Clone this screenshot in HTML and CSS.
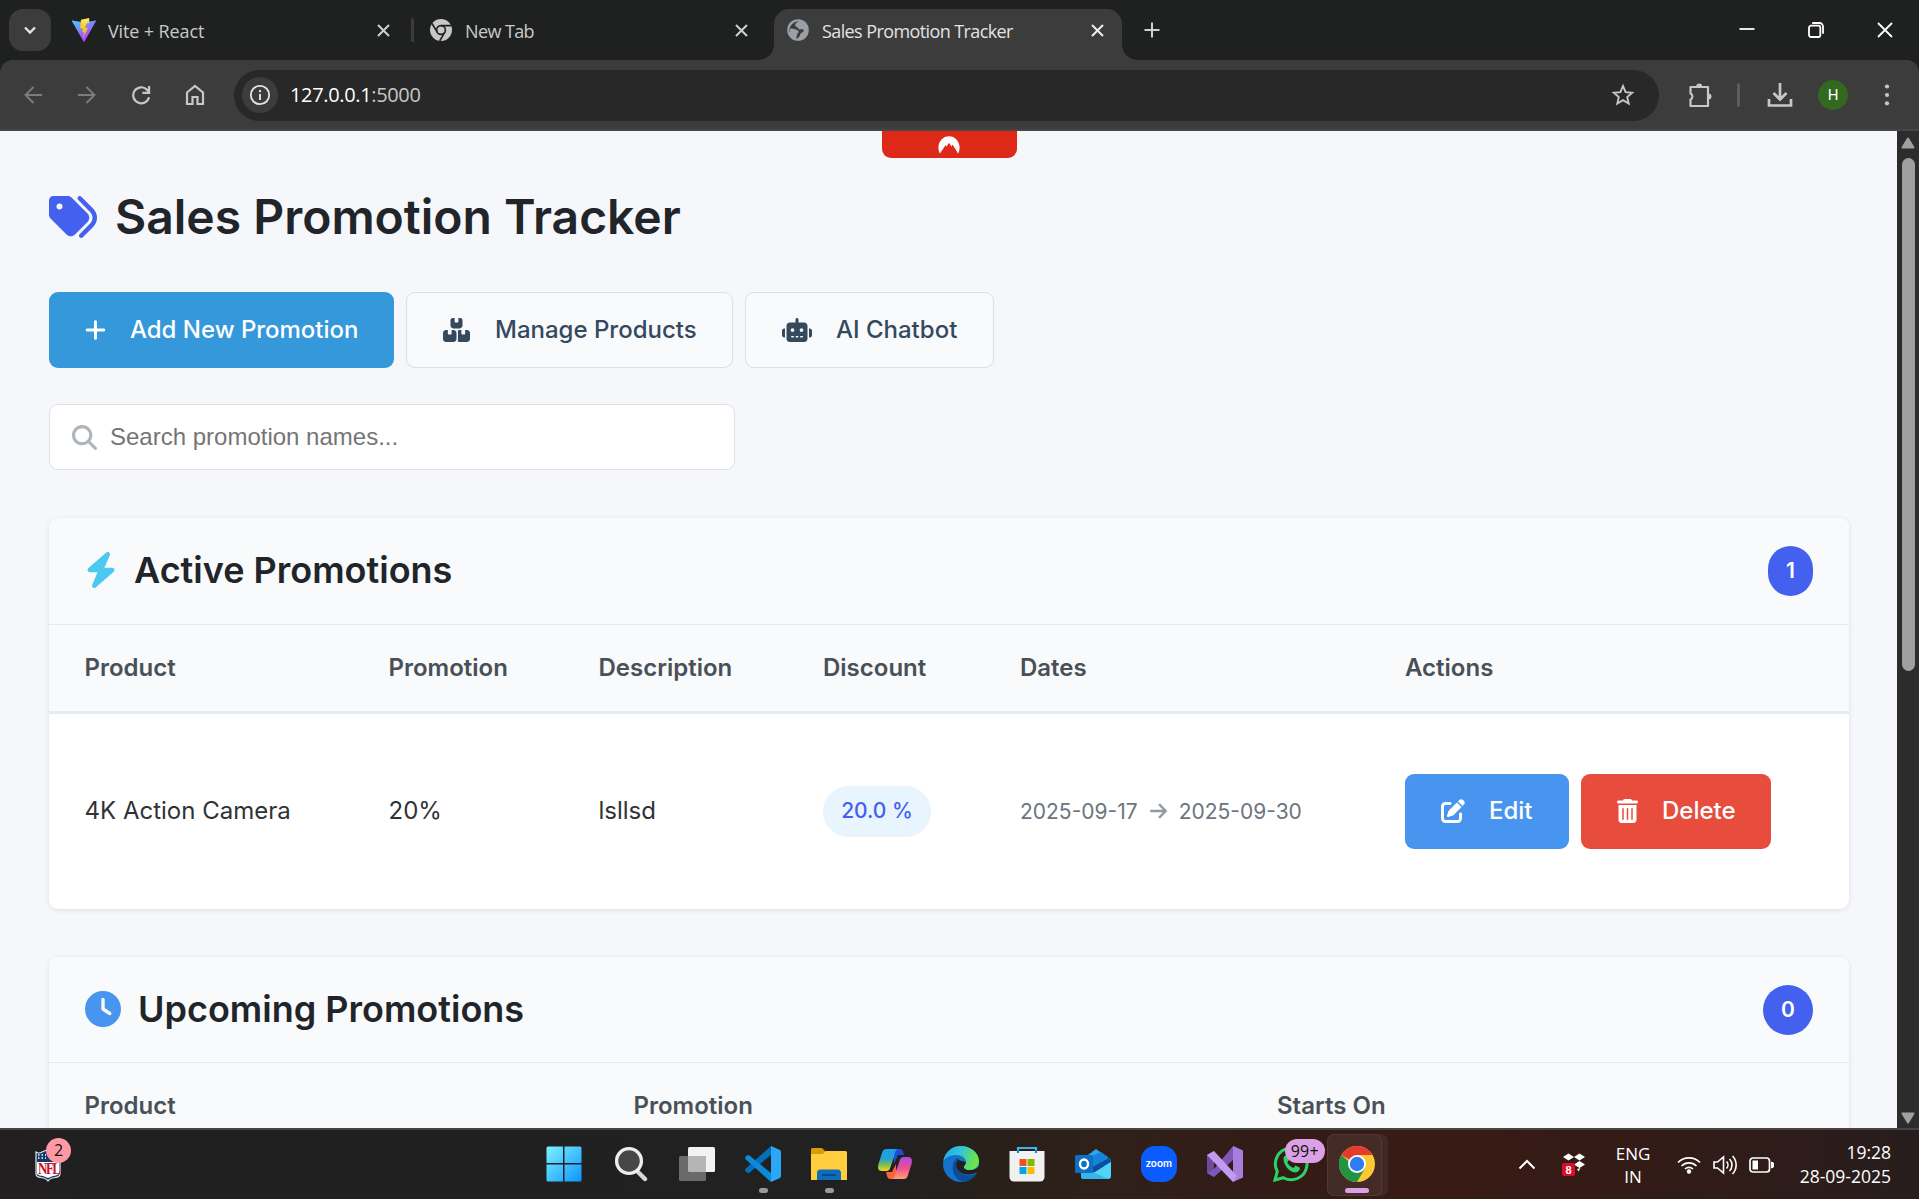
FILE: index.html
```html
<!DOCTYPE html>
<html lang="en">
<head>
<meta charset="utf-8">
<title>Sales Promotion Tracker</title>
<link rel="stylesheet" href="styles.css">
</head>
<body>
<div class="screen">
  <header class="tabstrip">
    <button class="tab-menu"><svg width="14" height="14" viewBox="0 0 14 14"><path d="M2 4.500l5 5 5-5" fill="none" stroke="#e3e3e3" stroke-width="2.400"/></svg></button>
    <div class="tab tab-first">
      <svg class="favicon" width="24" height="24" viewBox="0 0 24 24"><defs><linearGradient id="va" x1="0" y1="0" x2=".6" y2="1"><stop offset="0" stop-color="#41d1ff"/><stop offset="1" stop-color="#bd34fe"/></linearGradient><linearGradient id="vb" x1="0" y1="0" x2="0" y2="1"><stop offset="0" stop-color="#ffea83"/><stop offset=".2" stop-color="#ffdd35"/><stop offset="1" stop-color="#ffa800"/></linearGradient></defs><path d="M.4 2.400L12.200 4.500 23.700 2.400a.5.5 0 0 1 .3.700L12.500 23.600a.6.6 0 0 1-1 0L0 3.200a.5.5 0 0 1 .4-.8z" fill="url(#va)"/><path d="M17.200.1L8.900 1.700l-.6 9 2.600-.5-.7 4 1.900-.5-1.300 6.600 5.300-10.500-2.900.5 1.200-4.700 2.800-.5z" fill="url(#vb)"/></svg>
      <span class="tab-title t-vite">Vite + React</span>
      <svg class="x" width="13" height="13" viewBox="0 0 13 13"><path d="M1 1l11 11M12 1L1 12"/></svg>
    </div>
    <i class="tab-sep"></i>
    <div class="tab tab-second">
      <svg class="favicon" width="24" height="24" viewBox="0 0 24 24"><circle cx="12" cy="12" r="11" fill="#c7c7c7"/><circle cx="12" cy="12" r="5.200" fill="#1f2120"/><circle cx="12" cy="12" r="3.600" fill="#c7c7c7"/><path d="M12 7.600h10M8.200 14.200L3 5.500M15.800 14.200L10.700 23" stroke="#1f2120" stroke-width="1.600"/></svg>
      <span class="tab-title t-new">New Tab</span>
      <svg class="x" width="13" height="13" viewBox="0 0 13 13"><path d="M1 1l11 11M12 1L1 12"/></svg>
    </div>
    <div class="tab tab-active">
      <svg class="favicon" width="24" height="24" viewBox="0 0 24 24"><circle cx="12" cy="12" r="10.800" fill="#9aa0a6"/><path d="M12.800 3.200c-1.500 1-3.600 1.800-3.600 4 0 2 3.300 1.500 3.300 4h4.200c1.300 0 1.500 2 .2 2.800-1.200.8-2.500 1-2.700 2.600-.2 1.700-1.700 3.300-3.700 4.200-.9-1.500.6-3 .3-4.600-.3-1.200-2-1-2-2.400H3.400c-.6-5.500 3.700-10.400 9.400-10.600z" fill="#3c3c3c"/><path d="M4.200 10.500c2 0 3.500-.2 5 .7 1.300.9 3.400.8 3.400 2.600s-2 1.800-2 3.400c-.2 1.700-.5 3-1 3.600-4.300-1.200-6.800-5.600-5.400-10.300z" fill="#9aa0a6"/></svg>
      <span class="tab-title t-sales">Sales Promotion Tracker</span>
      <svg class="x x-on" width="13" height="13" viewBox="0 0 13 13"><path d="M1 1l11 11M12 1L1 12"/></svg>
    </div>
    <svg class="newtab" width="16" height="16" viewBox="0 0 16 16"><path d="M8 .5v15M.5 8h15" stroke="#d0d0d0" stroke-width="2"/></svg>
    <div class="win-controls">
      <svg width="16" height="16" viewBox="0 0 16 16"><path d="M.5 7h15"/></svg>
      <svg width="16" height="16" viewBox="0 0 16 16"><rect x="1" y="3.700" width="11.300" height="11.300" rx="2"/><path d="M4.200 1h7.300a3.500 3.500 0 0 1 3.500 3.500v7.300"/></svg>
      <svg width="16" height="16" viewBox="0 0 16 16"><path d="M1 1l14 14M15 1L1 15"/></svg>
    </div>
  </header>

  <nav class="toolbar">
    <div class="nav-icons">
      <svg class="dim" width="18" height="18" viewBox="0 0 18 18"><path d="M18 9H2M9.500 1L1.500 9l8 8"/></svg>
      <svg class="dim" width="18" height="18" viewBox="0 0 18 18"><path d="M0 9h16M8.500 1l8 8-8 8"/></svg>
      <svg width="20" height="20" viewBox="0 0 20 20"><path d="M18 12.200A8 8 0 1 1 15.900 4.600L18 6.700M18.100 1v6.800h-6.800"/></svg>
      <svg width="20" height="22" viewBox="0 0 20 22"><path d="M2 8.500L10 2l8 6.500V20h-5.500v-7h-5v7H2z"/></svg>
    </div>
    <div class="omnibox">
      <span class="site-info"><svg width="22" height="22" viewBox="0 0 22 22"><circle cx="11" cy="11" r="9.200" fill="none" stroke="#e3e3e3" stroke-width="1.800"/><path d="M11 10v6M11 6v2.200" stroke="#e3e3e3" stroke-width="1.900"/></svg></span>
      <span class="url"><b>127.0.0.1</b>:5000</span>
      <svg class="star" width="24" height="24" viewBox="0 0 24 24"><path d="M12 3l2.600 6.100 6.600.6-5 4.400 1.500 6.500L12 17.100l-5.700 3.500 1.500-6.500-5-4.400 6.600-.6z" fill="none" stroke="#c7c7c7" stroke-width="1.900"/></svg>
    </div>
    <div class="toolbar-right">
      <svg width="26" height="26" viewBox="0 0 26 26"><path d="M3.500 5H21v19H3.500v-6.500a3.300 3.300 0 0 0 0-6z" fill="none" stroke="#c7c7c7" stroke-width="2.200" stroke-linejoin="round"/><path d="M9.200 4.500a3 3 0 0 1 6 0zM21.500 11.500a3 3 0 0 1 0 6z" fill="#c7c7c7"/></svg>
      <i class="bar-sep"></i>
      <svg width="26" height="26" viewBox="0 0 26 26"><path d="M13 1v16M6.500 11l6.500 6.500 6.500-6.500M2 17v6.500h22V17" fill="none" stroke="#c7c7c7" stroke-width="2.700"/></svg>
      <span class="avatar">H</span>
      <svg width="6" height="24" viewBox="0 0 6 24" fill="#c7c7c7"><circle cx="3" cy="3.500" r="2.100"/><circle cx="3" cy="12" r="2.100"/><circle cx="3" cy="20.300" r="2.100"/></svg>
    </div>
  </nav>

  <div class="viewport">
    <main class="page">
      <div class="vpn-tab"><svg width="22" height="18" viewBox="0 0 22 18"><path d="M1.900 17.500C.8 15.500.4 13.600.4 11.500.4 5.200 5.200.3 11 .3s10.600 4.900 10.600 11.200c0 2.100-.5 4-1.500 6l-5.600-8.900-.9 1.500.3 1.100L11 6.800l-2.300 3.600.6 1.500-1.600-3z" fill="#fff"/></svg></div>
      <h1 class="page-title"><svg width="48" height="48" viewBox="0 0 512 512"><path d="M345 39.100L472.800 168.400c52.400 53 52.400 138.200 0 191.200L360.800 472.900c-9.300 9.400-24.500 9.500-33.900 .2s-9.500-24.500-.2-33.900L438.600 325.900c33.900-34.300 33.900-89.400 0-123.700L310.900 72.900c-9.300-9.400-9.200-24.600 .2-33.900s24.600-9.200 33.900 .2zM0 229.500L0 80C0 53.500 21.500 32 48 32l149.500 0c17 0 33.300 6.700 45.300 18.700l168 168c25 25 25 65.500 0 90.500L277.300 442.700c-25 25-65.500 25-90.500 0l-168-168C6.700 262.700 0 246.500 0 229.500zM144 144a32 32 0 1 0 -64 0 32 32 0 1 0 64 0z"/></svg><span>Sales Promotion Tracker</span></h1>
      <div class="actions">
        <button class="btn btn-add"><svg width="21" height="24" viewBox="0 0 448 512"><path d="M256 80c0-17.700-14.300-32-32-32s-32 14.300-32 32l0 144L48 224c-17.700 0-32 14.300-32 32s14.300 32 32 32l144 0 0 144c0 17.700 14.300 32 32 32s32-14.300 32-32l0-144 144 0c17.700 0 32-14.300 32-32s-14.300-32-32-32l-144 0 0-144z"/></svg><span>Add New Promotion</span></button>
        <button class="btn btn-light btn-manage"><svg width="27" height="24" viewBox="0 0 576 512"><path d="M248 0L208 0c-26.500 0-48 21.500-48 48l0 112c0 35.300 28.700 64 64 64l128 0c35.300 0 64-28.700 64-64l0-112c0-26.500-21.500-48-48-48L328 0l0 80c0 8.800-7.200 16-16 16l-48 0c-8.800 0-16-7.200-16-16l0-80zM64 256c-35.300 0-64 28.700-64 64L0 448c0 35.300 28.700 64 64 64l160 0c35.300 0 64-28.700 64-64l0-128c0-35.300-28.700-64-64-64l-40 0 0 80c0 8.800-7.200 16-16 16l-48 0c-8.800 0-16-7.200-16-16l0-80-40 0zM352 512l160 0c35.300 0 64-28.700 64-64l0-128c0-35.300-28.700-64-64-64l-40 0 0 80c0 8.800-7.200 16-16 16l-48 0c-8.800 0-16-7.200-16-16l0-80-40 0c-15 0-28.800 5.100-39.700 13.800c4.900 10.400 7.700 22 7.700 34.200l0 160c0 12.200-2.800 23.800-7.700 34.200C323.200 506.900 337 512 352 512z"/></svg><span>Manage Products</span></button>
        <button class="btn btn-light btn-chat"><svg width="30" height="24" viewBox="0 0 640 512"><path d="M320 0c17.700 0 32 14.300 32 32l0 64 120 0c39.800 0 72 32.200 72 72l0 272c0 39.800-32.200 72-72 72l-304 0c-39.800 0-72-32.200-72-72l0-272c0-39.800 32.200-72 72-72l120 0 0-64c0-17.700 14.300-32 32-32zM208 384c-8.800 0-16 7.200-16 16s7.200 16 16 16l32 0c8.800 0 16-7.200 16-16s-7.200-16-16-16l-32 0zm96 0c-8.800 0-16 7.200-16 16s7.200 16 16 16l32 0c8.800 0 16-7.200 16-16s-7.200-16-16-16l-32 0zm96 0c-8.800 0-16 7.200-16 16s7.200 16 16 16l32 0c8.800 0 16-7.200 16-16s-7.200-16-16-16l-32 0zM264 256a40 40 0 1 0 -80 0 40 40 0 1 0 80 0zm152 40a40 40 0 1 0 0-80 40 40 0 1 0 0 80zM48 224l16 0 0 192-16 0c-26.500 0-48-21.500-48-48l0-96c0-26.500 21.500-48 48-48zm544 0c26.500 0 48 21.500 48 48l0 96c0 26.500-21.500 48-48 48l-16 0 0-192 16 0z"/></svg><span>AI Chatbot</span></button>
      </div>
      <div class="search"><svg width="25" height="25" viewBox="0 0 512 512"><path d="M416 208c0 45.900-14.900 88.300-40 122.700L502.600 457.400c12.500 12.500 12.500 32.800 0 45.300s-32.800 12.500-45.300 0L330.700 376c-34.400 25.200-76.800 40-122.700 40C93.100 416 0 322.900 0 208S93.100 0 208 0S416 93.100 416 208zM208 352a144 144 0 1 0 0-288 144 144 0 1 0 0 288z"/></svg><span>Search promotion names...</span></div>

      <section class="card">
        <div class="card-head">
          <svg class="bolt" width="32" height="36" viewBox="0 0 448 512"><path d="M349.400 44.600c5.900-13.700 1.500-29.700-10.600-38.500s-28.600-8-39.900 1.800l-256 224c-10 8.800-13.600 22.900-8.900 35.300S50.700 288 64 288l111.500 0L98.600 467.400c-5.900 13.700-1.500 29.700 10.600 38.500s28.600 8 39.900-1.800l256-224c10-8.800 13.600-22.900 8.900-35.300s-16.600-20.700-30-20.700l-111.500 0L349.400 44.600z"/></svg>
          <h2>Active Promotions</h2><span class="count">1</span>
        </div>
        <div class="row row-head cols-active"><span>Product</span><span>Promotion</span><span>Description</span><span>Discount</span><span>Dates</span><span>Actions</span></div>
        <div class="row row-body cols-active">
          <span>4K Action Camera</span><span>20%</span><span>lsllsd</span>
          <span class="discount-cell"><em class="discount">20.0 %</em></span>
          <span class="dates"><span>2025-09-17</span><svg width="17" height="20" viewBox="0 0 448 512"><path d="M438.600 278.600c12.500-12.500 12.500-32.800 0-45.300l-160-160c-12.500-12.500-32.800-12.500-45.300 0s-12.500 32.800 0 45.300L338.800 224 32 224c-17.700 0-32 14.300-32 32s14.300 32 32 32l306.700 0L233.400 393.400c-12.500 12.500-12.500 32.800 0 45.300s32.800 12.500 45.300 0l160-160z"/></svg><span>2025-09-30</span></span>
          <span class="row-actions">
            <button class="btn btn-edit"><svg width="24" height="24" viewBox="0 0 512 512"><path d="M471.600 21.700c-21.900-21.900-57.300-21.900-79.200 0L362.300 51.700l97.900 97.900 30.100-30.100c21.900-21.900 21.900-57.300 0-79.200L471.600 21.700zm-299.200 220c-6.100 6.100-10.800 13.600-13.500 21.900l-29.600 88.800c-2.900 8.600-.6 18.100 5.800 24.600s15.900 8.700 24.600 5.800l88.800-29.600c8.200-2.700 15.700-7.400 21.900-13.500L437.700 172.300 339.700 74.300 172.400 241.700zM96 64C43 64 0 107 0 160L0 416c0 53 43 96 96 96l256 0c53 0 96-43 96-96l0-96c0-17.700-14.300-32-32-32s-32 14.300-32 32l0 96c0 17.700-14.300 32-32 32L96 448c-17.700 0-32-14.300-32-32l0-256c0-17.700 14.300-32 32-32l96 0c17.700 0 32-14.300 32-32s-14.300-32-32-32L96 64z"/></svg><span>Edit</span></button>
            <button class="btn btn-delete"><svg width="21" height="24" viewBox="0 0 448 512"><path d="M135.200 17.700C140.600 6.800 151.700 0 163.800 0L284.200 0c12.100 0 23.200 6.800 28.600 17.700L320 32l96 0c17.700 0 32 14.300 32 32s-14.300 32-32 32L32 96C14.300 96 0 81.700 0 64S14.300 32 32 32l96 0 7.200-14.300zM32 128l384 0 0 320c0 35.300-28.700 64-64 64L96 512c-35.300 0-64-28.700-64-64l0-320zm96 64c-8.800 0-16 7.200-16 16l0 224c0 8.800 7.200 16 16 16s16-7.200 16-16l0-224c0-8.800-7.200-16-16-16zm96 0c-8.800 0-16 7.200-16 16l0 224c0 8.800 7.200 16 16 16s16-7.200 16-16l0-224c0-8.800-7.200-16-16-16zm96 0c-8.800 0-16 7.200-16 16l0 224c0 8.800 7.200 16 16 16s16-7.200 16-16l0-224c0-8.800-7.200-16-16-16z"/></svg><span>Delete</span></button>
          </span>
        </div>
      </section>

      <section class="card card-upcoming">
        <div class="card-head">
          <svg class="clock" width="36" height="36" viewBox="0 0 512 512"><path d="M256 0a256 256 0 1 1 0 512A256 256 0 1 1 256 0zM232 120l0 136c0 8 4 15.500 10.700 20l96 64c11 7.400 25.900 4.400 33.300-6.700s4.400-25.900-6.700-33.300L280 243.200 280 120c0-13.300-10.700-24-24-24s-24 10.700-24 24z"/></svg>
          <h2>Upcoming Promotions</h2><span class="count count-zero">0</span>
        </div>
        <div class="row row-head cols-upcoming"><span>Product</span><span>Promotion</span><span>Starts On</span></div>
      </section>
    </main>
    <aside class="scrollbar">
      <svg width="14" height="12" viewBox="0 0 14 12"><path d="M7 1.500L12.500 10.500h-11z" fill="#a0a0a0" stroke="#a0a0a0" stroke-width="2" stroke-linejoin="round"/></svg>
      <i class="thumb"></i>
      <svg width="14" height="12" viewBox="0 0 14 12"><path d="M7 10.500L12.500 1.500h-11z" fill="#a0a0a0" stroke="#a0a0a0" stroke-width="2" stroke-linejoin="round"/></svg>
    </aside>
  </div>

  <footer class="taskbar">
    <div class="widget">
      <svg width="26" height="32" viewBox="0 0 26 32"><path d="M1 2q3 2 6 0 3-1.500 6-2 3 .5 6 2 3 2 6 0v22q0 3-5 3.500-5 .5-7 3.500-2-3-7-3.500-5-.5-5-3.500z" fill="#13396b" stroke="#e8e8e8" stroke-width="1.200"/><path d="M3 5h8M3 8h8" stroke="#fff" stroke-width="1.500" stroke-dasharray="1.500 2"/><path d="M2 12h22v12q-3 2-6 2l-5 2-5-2q-4 0-6-2z" fill="#fff"/></svg>
      <span class="nfl">NFL</span><span class="badge-two">2</span>
    </div>
    <div class="apps">
      <span class="app"><svg width="36" height="36" viewBox="0 0 36 36"><defs><linearGradient id="w" gradientUnits="userSpaceOnUse" x1="0" y1="0" x2="36" y2="36"><stop offset="0" stop-color="#7df3ff"/><stop offset=".5" stop-color="#45c4ff"/><stop offset="1" stop-color="#0b93fb"/></linearGradient></defs><path d="M2 .5h15v16.500H.5V2A1.500 1.500 0 0 1 2 .5zM18.500.5H34A1.500 1.500 0 0 1 35.500 2v15h-17zM.5 18.500H17v17H2A1.500 1.500 0 0 1 .5 34zM18.500 18.500h17V34a1.500 1.500 0 0 1-1.500 1.500H18.500z" fill="url(#w)"/></svg></span>
      <span class="app nudge"><svg width="36" height="36" viewBox="0 0 36 36"><path d="M24 25l8 8" stroke="#d4d8e0" stroke-width="4.400" stroke-linecap="round"/><circle cx="16" cy="15" r="12.400" fill="#474747" stroke="#eceef0" stroke-width="3.300"/></svg></span>
      <span class="app nudge"><svg width="38" height="36" viewBox="0 0 38 36"><rect x="10" y="1" width="27" height="25" rx="1.500" fill="#f2f2f2"/><rect x="1" y="10" width="27" height="25" rx="1.500" fill="#6a6a6a"/><path d="M10 10h16.500a1.500 1.500 0 0 1 1.500 1.500V26H11.500a1.500 1.500 0 0 1-1.500-1.500z" fill="#b5b5b5"/></svg></span>
      <span class="app nudge"><svg width="36" height="36" viewBox="0 0 36 36"><path d="M26 0v9L4.500 26.500a2 2 0 0 1-2.600 0L.6 25.300a1.800 1.800 0 0 1 0-2.600z" fill="#0070ba"/><path d="M26 36v-9L4.500 9.500a2 2 0 0 0-2.600 0L.6 10.700a1.800 1.800 0 0 0 0 2.600z" fill="#0a8ad8"/><path d="M26 0l8.500 3.800A2.500 2.500 0 0 1 36 6v24a2.500 2.500 0 0 1-1.500 2.200L26 36z" fill="#2aa7f5"/></svg><i class="dot"></i></span>
      <span class="app nudge"><svg width="36" height="34" viewBox="0 0 36 34"><path d="M0 2.500A1.500 1.500 0 0 1 1.500 1H11l4 4v6H0z" fill="#dc9a05"/><path d="M0 7h11.500L15 4h19.500A1.500 1.500 0 0 1 36 5.500V33H0z" fill="#ffcd3e"/><path d="M6 33v-7a3.500 3.500 0 0 1 3.500-3.500h17A3.500 3.500 0 0 1 30 26v7z" fill="#0f6cbd"/><path d="M11 28h14" stroke="#0a3f78" stroke-width="1.500"/></svg><i class="dot"></i></span>
      <span class="app nudge"><svg width="36" height="36" viewBox="0 0 36 36"><defs><linearGradient id="ca" x1="0" y1="0" x2="0" y2="1"><stop offset="0" stop-color="#1aa0ee"/><stop offset=".45" stop-color="#2a9fd0"/><stop offset=".75" stop-color="#83c341"/><stop offset="1" stop-color="#fbd22e"/></linearGradient><linearGradient id="cb" x1="0" y1="0" x2="0" y2="1"><stop offset="0" stop-color="#a84be0"/><stop offset=".5" stop-color="#ee4d94"/><stop offset="1" stop-color="#ffa36c"/></linearGradient></defs><path d="M17 3h6c3 0 3 3 4 6h-6l-4 9z" fill="#1d4cd6"/><path d="M19 33h-6c-3 0-3-4-4-7h6l4-8z" fill="#f8643f"/><path d="M9.500 3H21c-3 1-3 4-4 8l-3.500 10c-1 3-2 4-4 4H5c-4 0-4.500-3-3.500-7L5 7c1-3 2-4 4.500-4z" fill="url(#ca)"/><path d="M26.500 33H15c3-1 3-4 4-8l3.500-10c1-3 2-4 4-4H31c4 0 4.500 3 3.500 7L31 29c-1 3-2 4-4.500 4z" fill="url(#cb)"/></svg></span>
      <span class="app"><svg width="36" height="36" viewBox="0 0 36 36"><defs><linearGradient id="ea" x1="0" y1="0" x2="1" y2=".3"><stop offset="0" stop-color="#22a6e8"/><stop offset=".5" stop-color="#32c4d8"/><stop offset="1" stop-color="#6be548"/></linearGradient></defs><circle cx="18" cy="18" r="18" fill="#1272cc"/><path d="M.3 15C2 6 9 0 18 0c10 0 18 7 18 15 0 6-4.500 9-9.500 9-4 0-5.500-1.500-5.500-3s2-2 2-5c0-4-4.500-7-10-7C7 9 2 12 .3 15z" fill="url(#ea)"/><path d="M14 12c-6 4-7 19 6 24 6-.5 11-4 13.500-8.500-3 1.500-6 2-8.500 1.800-7-.5-11-4.300-11-9.300 0-3 1.500-5 3-6z" fill="#0c4c98"/><path d="M15.500 14c-2 1.500-3 4-2 7 1.300 4.500 6 7.500 12 7.500 4 0 7-1.500 9-2.500.7-2 1.300-4 1.300-6-2 3-5 4.200-9 4.200-4.500 0-6-1.700-6-3.200 0-1.600 2-2 2-5z" fill="#221f1d"/></svg></span>
      <span class="app"><svg width="36" height="36" viewBox="0 0 36 36"><path d="M9 7V2h18v5" fill="none" stroke="#35b6ef" stroke-width="2.200"/><path d="M.5 5h35v26a4.500 4.500 0 0 1-4.500 4.500H5A4.500 4.500 0 0 1 .5 31z" fill="#f1f1f1"/><path d="M9 7V4M27 7V4" stroke="#1687d0" stroke-width="2.200"/><path fill="#f25022" d="M10.500 13h7v7h-7z"/><path fill="#7fba00" d="M18.500 13h7v7h-7z"/><path fill="#00a4ef" d="M10.500 21h7v7h-7z"/><path fill="#ffb900" d="M18.500 21h7v7h-7z"/></svg></span>
      <span class="app"><svg width="36" height="36" viewBox="0 0 36 36"><path d="M6 14L21 3l15 11v6H6z" fill="#28a8ea"/><path d="M15 11l11-5 7 5-18 13z" fill="#1483d8"/><path d="M35 11l1 5L14 29v-6z" fill="#0b4fa3"/><path d="M36 16v14a3 3 0 0 1-3 3H9a3 3 0 0 1-3-3v-3h12z" fill="#4fd4fa"/><path d="M6 26h12l15 7H9a3 3 0 0 1-3-3z" fill="#35b4ee"/><rect y="9" width="18" height="18" rx="1.500" fill="#0f6fc6"/><ellipse cx="9" cy="18" rx="4" ry="4.500" fill="none" stroke="#fff" stroke-width="2.400"/></svg></span>
      <span class="app"><span class="zoom-logo">zoom</span></span>
      <span class="app"><svg width="36" height="36" viewBox="0 0 36 36"><path d="M0 9l7-4v26l-7-4z" fill="#6b4b9a"/><path d="M26 0l10 5-29 26-7-4 7-4z" fill="#7f57b8"/><path d="M26 0l10 4.500v27L26 36z" fill="#a97ddc"/><path d="M7 5L0 9l26 27 4-6z" fill="#c39af0"/></svg></span>
      <span class="app"><svg width="36" height="36" viewBox="0 0 36 36"><path d="M2 34l2.300-8.500A15.800 15.800 0 1 1 10.400 31.700z" fill="none" stroke="#2bd366" stroke-width="3"/><path d="M10.500 12c1-3 3.500-3 4.300-1l1.200 3-1.700 2.500c1.700 3 3.500 4.400 6.200 5.500l2-2.500 4.500 2.200c0 3-2.500 4.700-5 4.700-5 0-12-7-11.500-14.400z" fill="#2bd366"/></svg><span class="badge-many">99+</span></span>
      <span class="app chrome"><svg width="36" height="36" viewBox="0 0 36 36"><circle cx="18" cy="18" r="18" fill="#fcc934"/><path d="M18 18L2.400 9A18 18 0 0 1 33.600 9z" fill="#e33b2e"/><path d="M2.400 9A18 18 0 0 0 18 36l7.800-13.500H18z" fill="#229342"/><path d="M18 9h15.600L25.800 22.500z" fill="#fcc934"/><circle cx="18" cy="18" r="9" fill="#fff"/><circle cx="18" cy="18" r="7.200" fill="#2f7cf0"/></svg><i class="dot dot-on"></i></span>
    </div>
    <div class="tray">
      <svg width="18" height="11" viewBox="0 0 18 11"><path d="M1.500 9.500L9 2l7.500 7.500" fill="none" stroke="#fff" stroke-width="2"/></svg>
      <span class="dropbox"><svg width="24" height="24" viewBox="0 0 24 24"><path d="M1 4l5.500-3.500L12 4 6.500 7.500zM12 4L17.500.5 23 4l-5.500 3.500zM12 11.500L17.500 8l5.500 3.500-5.500 3.500zM15 16l3.500-1-2 3.500z" fill="#fff"/></svg><span class="drop-num">8</span></span>
      <span class="lang"><span>ENG</span><span>IN</span></span>
      <svg class="t-wifi" width="24" height="18" viewBox="0 0 24 18"><path d="M1 6.500a15.500 15.500 0 0 1 22 0M4.500 10a10.600 10.600 0 0 1 15 0M8 13a5.700 5.700 0 0 1 8 0" fill="none" stroke="#fff" stroke-width="1.700"/><circle cx="12" cy="15.500" r="2.200" fill="#fff"/></svg>
      <svg class="t-vol" width="25" height="20" viewBox="0 0 25 20"><path d="M1 7v6h3.500l6 5V2l-6 5zM13.500 6.500a5 5 0 0 1 0 7M16.500 4a8.500 8.500 0 0 1 0 12M19.500 1a13 13 0 0 1 0 18" fill="none" stroke="#fff" stroke-width="1.600"/></svg>
      <svg class="t-bat" width="25" height="16" viewBox="0 0 25 16"><rect x="1" y="1" width="19.500" height="14" rx="3" fill="none" stroke="#fff" stroke-width="1.700"/><rect x="3.500" y="3.500" width="5.500" height="9" fill="#fff"/><path d="M22.500 5v6l2-1V6z" fill="#fff" stroke="#fff"/></svg>
      <span class="datetime"><span>19:28</span><span>28-09-2025</span></span>
    </div>
  </footer>
</div>
</body>
</html>
```
FILE: styles.css
```css
* { box-sizing: border-box; }
body { margin: 0; overflow: hidden; font-family: "Inter", sans-serif; }
button { border: 0; margin: 0; padding: 0; font: inherit; }
svg { display: block; flex: none; }
i, em { font-style: normal; }
.screen { width: 1919px; height: 1199px; display: flex; flex-direction: column; overflow: hidden; }

/* Browser tab strip */
.tabstrip { height: 60px; flex: none; background: #1f2120; display: flex; align-items: flex-start; padding: 9px 0 0 9px; font-family: "Open Sans", sans-serif; position: relative; z-index: 1; }
.tab-menu { width: 42px; height: 42px; border-radius: 14px; background: #3c3c3c; display: flex; align-items: center; justify-content: center; margin-right: 20px; }
.tab { display: flex; align-items: center; height: 51px; padding-bottom: 9px; }
.tab-first { width: 340px; padding-left: 1px; padding-right: 21px; }
.tab-second { width: 360px; padding-left: 15px; padding-right: 26px; }
.tab-active { width: 348px; padding: 0 18px 9px 12px; background: #3c3c3c; border-radius: 15px 15px 0 0; position: relative; }
.tab-active::before, .tab-active::after { content: ""; position: absolute; bottom: 0; width: 15px; height: 15px; }
.tab-active::before { right: 100%; background: radial-gradient(circle at 0 0, transparent 14.500px, #3c3c3c 15px); }
.tab-active::after { left: 100%; background: radial-gradient(circle at 100% 0, transparent 14.500px, #3c3c3c 15px); }
.favicon { margin-right: 12px; }
.tab-title { font-size: 18px; line-height: 24px; color: #c9c9c9; flex: 1; padding-top: 2px; white-space: nowrap; }
.t-vite { letter-spacing: -.12px; }
.t-new { letter-spacing: -.6px; }
.t-sales { color: #e3e3e3; letter-spacing: -.6px; }
.x path { stroke: #d0d0d0; stroke-width: 2; }
.x-on path { stroke: #eee; }
.tab-sep { width: 3px; height: 24px; margin-top: 9px; background: #3c3c3c; border-radius: 2px; }
.newtab { margin: 13px 0 0 22px; }
.win-controls { margin: 13px 26px 0 auto; display: flex; gap: 53px; }
.win-controls svg { fill: none; stroke: #fff; stroke-width: 1.800; }

/* Address bar row */
.toolbar { height: 71px; flex: none; background: linear-gradient(#3c3c3c, #3c3c3c) 0 0 / 100% 69px no-repeat, #474747; display: flex; align-items: center; padding-bottom: 1px; position: relative; }
.toolbar::before, .toolbar::after { content: ""; position: absolute; top: 0; width: 12px; height: 12px; }
.toolbar::before { left: 0; background: radial-gradient(circle at 100% 100%, transparent 11.500px, #1f2120 12px); }
.toolbar::after { right: 0; background: radial-gradient(circle at 0 100%, transparent 11.500px, #1f2120 12px); }
.nav-icons { width: 234px; display: flex; align-items: center; padding-left: 24px; gap: 35px; }
.nav-icons svg { fill: none; stroke: #c7c7c7; stroke-width: 2.200; }
.nav-icons .dim { stroke: #7c7c7c; stroke-width: 1.900; }
.nav-icons svg:nth-child(1) { margin-right: 1px; }
.nav-icons svg:nth-child(4) { margin-left: -1px; }
.omnibox { width: 1425px; height: 51px; border-radius: 26px; background: #282828; display: flex; align-items: center; padding: 0 24px 0 8px; }
.site-info { width: 36px; height: 36px; border-radius: 50%; background: #3c3c3c; display: flex; align-items: center; justify-content: center; margin-right: 12px; }
.url { flex: 1; font: 20px/28px "Open Sans", sans-serif; color: #c7c7c7; letter-spacing: -.35px; }
.url b { font-weight: 400; color: #fff; }
.toolbar-right { flex: 1; display: flex; align-items: center; padding-left: 28px; }
.bar-sep { width: 3px; height: 24px; background: #5c5c5c; border-radius: 2px; margin: 0 27px 0 24px; }
.avatar { width: 30px; height: 30px; border-radius: 50%; background: #33691e; color: #fff; font: 15px/30px Roboto, sans-serif; text-align: center; margin: 0 36px 0 25px; }

/* Page */
.viewport { flex: 1; min-height: 0; display: flex; }
.page { width: 1897px; height: 100%; background: #f5f7fb; padding: 0 48px 0 49px; overflow: hidden; position: relative; }
.vpn-tab { position: absolute; left: 881.500px; top: 0; width: 135px; height: 27px; border-radius: 0 0 9px 9px; background: #de2818; display: flex; align-items: center; justify-content: center; padding-top: 1px; }
.page-title { margin: 0; padding-top: 56px; height: 161px; display: flex; align-items: flex-start; font-size: 48px; line-height: 60px; font-weight: 600; color: #212529; }
.page-title svg { fill: #4361ee; margin: 6px 18px 0 0; }
.actions { display: flex; gap: 12px; height: 76px; }
.btn { border-radius: 9px; height: 76px; display: flex; align-items: center; font-size: 24px; font-weight: 500; white-space: nowrap; }
.btn svg { fill: currentColor; }
.btn span { padding-bottom: 2px; }
.btn-add { width: 345px; background: #3498db; color: #fff; padding-left: 36px; gap: 24px; }
.btn-add span { letter-spacing: -.02px; }
.btn-light { background: #f8fafc; border: 1px solid #dcdfe1; color: #34495e; }
.btn-manage { width: 327px; padding-left: 36px; gap: 25px; }
.btn-chat { width: 249px; padding-left: 36px; gap: 24px; }
.search { margin-top: 36px; width: 686px; height: 66px; border: 1px solid #dee2e6; border-radius: 9px; background: #fff; display: flex; align-items: center; padding-left: 22px; gap: 13px; font: 24px/32px "Liberation Sans", Arial, sans-serif; color: #757575; }
.search svg { fill: #adb5bd; }
.card { margin-top: 48px; height: 391px; border-radius: 9px; background: #fff; box-shadow: 0 1px 5px rgba(0,0,0,.1); overflow: hidden; }
.card-head { height: 107px; background: #f8fafc; border-bottom: 1px solid #e6e9ec; display: flex; align-items: center; padding: 0 36px; }
.card-head h2 { margin: 0; font-size: 36px; line-height: 44px; font-weight: 600; color: #212529; flex: 1; padding-bottom: 2px; }
.bolt { fill: #4cc9f0; margin: 0 17px 2px 0; }
.clock { fill: #4895ef; margin: 0 17px 2px 0; }
.count { width: 45px; height: 50px; border-radius: 25px; background: #4361ee; color: #fff; font-size: 21px; font-weight: 600; line-height: 50px; text-align: center; }
.count-zero { width: 50px; }
.row { display: grid; align-items: center; padding-left: 35.500px; font-size: 24px; white-space: nowrap; color: #2f3337; }
.cols-active { grid-template-columns: 304px 210px 224.500px 197px 385px 1fr; }
.cols-upcoming { grid-template-columns: 549px 643.500px 1fr; }
.row-head { height: 89px; background: #f8fafc; border-bottom: 3px solid #e9ecef; font-weight: 600; color: #495057; }
.row-head span { padding-bottom: 2px; }
.row-body { height: 195px; }
.row-body > span:nth-child(-n+3) { padding-bottom: 2px; }
.discount-cell { display: flex; }
.discount { width: 108px; height: 51px; border-radius: 26px; background: #e8f4fe; color: #4361ee; font-size: 21px; font-weight: 500; line-height: 50px; text-align: center; }
.dates { display: flex; align-items: center; gap: 12px; font-size: 21px; color: #6c757d; padding-bottom: 1px; }
.dates svg { fill: #9199a1; }
.row-actions { display: flex; gap: 12px; padding-bottom: 1px; }
.row-actions .btn { height: 75px; }
.btn-edit { width: 164px; background: #4895ef; color: #fff; padding-left: 36px; gap: 24px; }
.btn-delete { width: 190px; background: #e74c3c; color: #fff; padding-left: 36px; gap: 24px; }
.card-upcoming .card-head { height: 106px; }
.scrollbar { width: 22px; background: #2c2c2c; display: flex; flex-direction: column; align-items: center; padding: 6px 0 4px; }
.thumb { width: 13px; height: 513px; margin: 9px 0 auto; border-radius: 7px; background: #9f9f9f; }

/* Taskbar */
.taskbar { height: 71px; flex: none; border-top: 2px solid #474443; background: linear-gradient(90deg, #231f20 0, #202020 100px, #212121 890px, #282019 980px, #30201a 1120px, #331b16 1280px, #391b15 1420px, #341b16 1600px, #2d1c1a 1800px, #271d1e 100%); display: flex; color: #fff; font-family: "Open Sans", sans-serif; }
.widget { width: 531px; position: relative; padding: 20px 0 0 35px; }
.nfl { position: absolute; left: 38px; top: 32px; width: 22px; font: bold 13px/14px "Liberation Serif", serif; letter-spacing: -1.500px; color: #c8102e; transform: scaleY(1.300); }
.badge-two { position: absolute; left: 46px; top: 8px; width: 25px; height: 25px; border-radius: 50%; background: #ff9aa5; color: #111; font-size: 16px; line-height: 25px; text-align: center; }
.apps { display: flex; width: 859px; }
.app { width: 66.080px; height: 69px; display: flex; align-items: center; justify-content: center; position: relative; padding-bottom: 1px; }
.nudge { padding-left: 2px; }
.dot { position: absolute; bottom: 6px; left: 30px; width: 9px; height: 5px; border-radius: 3px; background: #9a9a9a; }
.dot-on { left: 21px; width: 24px; background: #dba0e6; }
.zoom-logo { width: 36px; height: 36px; border-radius: 14px; background: #0b5cff; font: 600 10px/34px "Inter", sans-serif; text-align: center; }
.badge-many { position: absolute; left: 27px; top: 9px; width: 40px; height: 24px; border-radius: 12px; background: #dba0e6; color: #111; font-size: 16px; line-height: 24px; text-align: center; letter-spacing: .3px; z-index: 1; }
.chrome::before { content: ""; position: absolute; left: 3px; top: 4px; width: 53px; height: 60px; border-radius: 7px; background: rgba(255,255,255,.07); border: 1px solid rgba(255,255,255,.07); box-shadow: 6px 0 0 rgba(255,255,255,.06); }
.chrome svg { position: relative; }
.tray { flex: 1; display: flex; align-items: center; padding: 0 28px 0 128px; }
.dropbox { margin-left: 26px; position: relative; }
.drop-num { position: absolute; left: 0; top: 10px; width: 13px; height: 13px; border-radius: 2px; background: #e00b2b; font: bold 11px/14px "Liberation Sans", sans-serif; text-align: center; }
.lang { width: 64px; margin-left: 15px; display: flex; flex-direction: column; font-size: 17px; line-height: 23px; text-align: center; }
.t-wifi { margin-left: 12px; }
.t-vol { margin-left: 12px; }
.t-bat { margin-left: 11px; }
.datetime { margin-left: auto; padding-bottom: 2px; display: flex; flex-direction: column; font-size: 17.500px; line-height: 24px; text-align: right; }
```
